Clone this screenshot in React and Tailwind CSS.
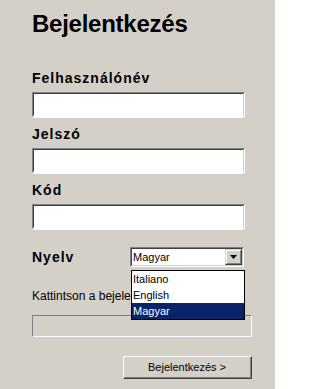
import { useState } from "react";

const LANGS = ["Italiano", "English", "Magyar"];

function Field({ label, type = "text" }) {
  return (
    <div className="flex flex-col">
      <label className="mb-[6px] h-4 text-[14px] font-bold leading-4 tracking-[1px] text-black">{label}</label>
      <div className="h-[25px] w-[213px] border-b border-l border-r border-t border-b-white border-l-[#808080] border-r-white border-t-[#808080]">
        <div className="h-full w-full border-b border-l border-r border-t border-b-[#d4d0c8] border-l-[#404040] border-r-[#d4d0c8] border-t-[#404040] bg-white">
          <input type={type} className="h-full w-full bg-white px-1 text-[12px] outline-none" />
        </div>
      </div>
    </div>
  );
}

export default function App() {
  const [lang, setLang] = useState("Magyar");

  return (
    <div className="h-[389px] w-[275px] overflow-hidden bg-[#d4d0c8] pl-8 pt-[10px] font-['Liberation_Sans',Arial,sans-serif] text-black">
      <h1 className="h-7 text-[24px] font-bold leading-7 tracking-[-0.25px]">Bejelentkezés</h1>

      <div className="mt-8 flex flex-col gap-[9px]">
        <Field label="Felhasználónév" />
        <Field label="Jelszó" type="password" />
        <Field label="Kód" />
      </div>

      {/* language row, list is shown open */}
      <div className="relative mt-[18px] flex h-5 items-center">
        <span className="w-[98px] text-[14px] font-bold leading-4 tracking-[1px]">Nyelv</span>
        <div className="relative h-5 w-[114px] border-b border-l border-r border-t border-b-white border-l-[#808080] border-r-white border-t-[#808080]">
          <div className="flex h-full w-full items-center border-b border-l border-r border-t border-b-[#d4d0c8] border-l-[#404040] border-r-[#d4d0c8] border-t-[#404040] bg-white">
            <span className="flex-1 pl-[1px] text-[11px] leading-none">{lang}</span>
            <div className="h-[16px] w-[17px] border-b border-l border-r border-t border-b-[#404040] border-l-[#d4d0c8] border-r-[#404040] border-t-[#d4d0c8]">
              <div className="flex h-full w-full items-center justify-center border-b border-l border-r border-t border-b-[#808080] border-l-white border-r-[#808080] border-t-white bg-[#d4d0c8]">
                <svg width="7" height="4" viewBox="0 0 7 4">
                  <path d="M0 0h7L3.5 4z" fill="#000" />
                </svg>
              </div>
            </div>
          </div>
          <ul className="absolute left-0 top-[22px] z-10 w-[114px] border border-black bg-white">
            {LANGS.map((l) => (
              <li
                key={l}
                onClick={() => setLang(l)}
                className={`h-4 pl-[1px] text-[11px] leading-4 ${l === lang ? "bg-[#0a246a] text-white" : "text-black"}`}
              >
                {l}
              </li>
            ))}
          </ul>
        </div>
      </div>

      <p className="mt-[22px] h-[14px] text-[12px] leading-[14px]">Kattintson a bejelentkezéshez</p>

      <div className="mt-3 h-[22px] w-[220px] border-b border-l border-r border-t border-b-white border-l-[#808080] border-r-white border-t-[#808080]" />

      <div className="mt-[19px] flex w-[220px] justify-end">
        <button className="h-[23px] w-[129px] border-b border-l border-r border-t border-b-[#404040] border-l-white border-r-[#404040] border-t-white">
          <span className="flex h-full w-full items-center justify-center border-b border-r border-b-[#808080] border-r-[#808080] bg-[#d4d0c8] text-[11px]">
            Bejelentkezés &gt;
          </span>
        </button>
      </div>
    </div>
  );
}
